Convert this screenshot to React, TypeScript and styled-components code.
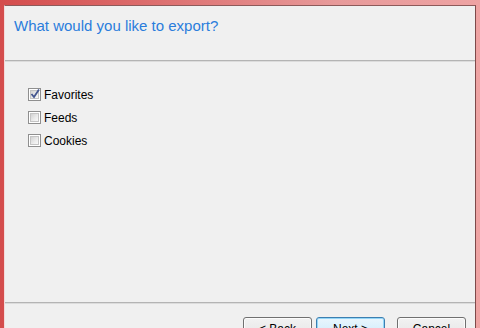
import React from "react";
import styled, { createGlobalStyle } from "styled-components";

const Global = createGlobalStyle`
  html, body { margin: 0; padding: 0; }
  body { width: 480px; height: 328px; overflow: hidden; font-family: "Liberation Sans", Arial, sans-serif; }
`;

const Frame = styled.div`
  width: 480px;
  height: 328px;
  box-sizing: border-box;
  padding: 5px 4px 0 4px;
  overflow: hidden;
  background: linear-gradient(90deg, #d44c4c 0%, #dc6c6c 30%, #e79a9a 70%, #eea3a3 100%);
`;

const Window = styled.div`
  height: 360px;
  box-sizing: border-box;
  background: #f0f0f0;
  border-top: 1px solid #8d5a5a;
  border-right: 1px solid #7e4a4a;
  border-left: 1px solid #f3dada;
  display: flex;
  flex-direction: column;
`;

const Header = styled.div`
  height: 54px;
  box-sizing: border-box;
  padding: 10px 0 0 9px;
`;

const Title = styled.h1`
  margin: 0;
  font-weight: normal;
  font-size: 15px;
  line-height: 20px;
  color: #2a7ddc;
`;

const Separator = styled.div`
  height: 0;
  border-top: 1px solid #b4b4b4;
  border-bottom: 1px solid #dcdcdc;
`;

const Body = styled.div`
  height: 240px;
  box-sizing: border-box;
  padding: 21px 0 0 23px;
  display: flex;
  flex-direction: column;
`;

const Row = styled.label`
  display: flex;
  align-items: center;
  height: 23px;
  gap: 3px;
  font-size: 12px;
  color: #000;
`;

const Box = styled.span`
  width: 13px;
  height: 13px;
  box-sizing: border-box;
  border: 1px solid #8f8f8f;
  background: #fff;
  display: flex;
  padding: 1px;
`;

const BoxInner = styled.span`
  flex: 1;
  position: relative;
  background: linear-gradient(135deg, #d2d2d2 0%, #ececec 60%, #f8f8f8 100%);
  border: 1px solid #c4c4c4;
`;

const Check = styled.svg`
  position: absolute;
  left: -2px;
  top: -3px;
`;

const Footer = styled.div`
  display: flex;
  justify-content: flex-end;
  padding: 13px 9px 0 0;
`;

const Button = styled.div<{ $primary?: boolean; $gap?: number }>`
  width: 69px;
  height: 23px;
  box-sizing: border-box;
  margin-left: ${(p) => p.$gap ?? 0}px;
  border: 1px solid ${(p) => (p.$primary ? "#3c7fb1" : "#707070")};
  border-radius: 3px;
  background: ${(p) =>
    p.$primary
      ? "linear-gradient(#eaf6fd 0%, #d9f0fc 50%, #bee6fd 51%, #a7d9f5 100%)"
      : "linear-gradient(#f2f2f2 0%, #ebebeb 50%, #dddddd 51%, #cfcfcf 100%)"};
  box-shadow: inset 0 0 0 1px ${(p) => (p.$primary ? "#94d6f7" : "#fcfcfc")};
  display: flex;
  justify-content: center;
  padding-top: 4px;
  font-size: 12px;
  color: #000;
`;

const CheckMark = () => (
  <Check width="12" height="12" viewBox="0 0 12 12">
    <path d="M2.5 6 L5 9 L10 1.5" fill="none" stroke="#44568f" strokeWidth="1.8" />
  </Check>
);

const Item = ({ label, checked }: { label: string; checked?: boolean }) => (
  <Row>
    <Box>
      <BoxInner>{checked && <CheckMark />}</BoxInner>
    </Box>
    {label}
  </Row>
);

export default function App() {
  return (
    <>
      <Global />
      <Frame>
        <Window>
          <Header>
            <Title>What would you like to export?</Title>
          </Header>
          <Separator />
          <Body>
            <Item label="Favorites" checked />
            <Item label="Feeds" />
            <Item label="Cookies" />
          </Body>
          <Separator />
          <Footer>
            <Button>&lt; Back</Button>
            <Button $primary $gap={4}>Next &gt;</Button>
            <Button $gap={12}>Cancel</Button>
          </Footer>
        </Window>
      </Frame>
    </>
  );
}
